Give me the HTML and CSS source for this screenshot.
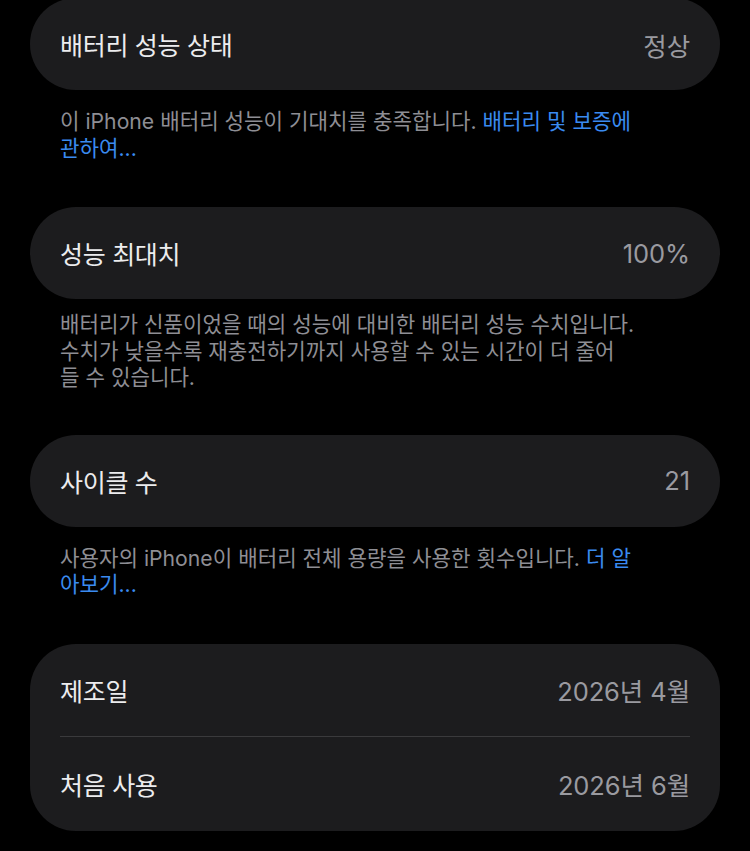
FILE: index.html
```html
<!DOCTYPE html>
<html lang="ko">
<head>
<meta charset="utf-8">
<title>배터리 성능 상태</title>
<link rel="stylesheet" href="styles.css">
</head>
<body>
<main class="page">
  <section class="group group-first">
    <div class="card">
      <div class="row"><span class="label">배터리 성능 상태</span><span class="value">정상</span></div>
    </div>
    <p class="note">이 iPhone 배터리 성능이 기대치를 충족합니다. <a class="link">배터리 및 보증에<br>관하여...</a></p>
  </section>
  <section class="group">
    <div class="card">
      <div class="row"><span class="label">성능 최대치</span><span class="value">100%</span></div>
    </div>
    <p class="note note-compact">배터리가 신품이었을 때의 성능에 대비한 배터리 성능 수치입니다.<br>수치가 낮을수록 재충전하기까지 사용할 수 있는 시간이 더 줄어<br>들 수 있습니다.</p>
  </section>
  <section class="group">
    <div class="card">
      <div class="row"><span class="label">사이클 수</span><span class="value">21</span></div>
    </div>
    <p class="note">사용자의 iPhone이 배터리 전체 용량을 사용한 횟수입니다. <a class="link">더 알<br>아보기...</a></p>
  </section>
  <section class="group">
    <div class="card">
      <div class="row"><span class="label">제조일</span><span class="value">2026년 4월</span></div>
      <div class="divider"></div>
      <div class="row row-last"><span class="label">처음 사용</span><span class="value">2026년 6월</span></div>
    </div>
  </section>
</main>
</body>
</html>
```
FILE: styles.css
```css
html, body {
  margin: 0;
  padding: 0;
  background: #000;
}
body {
  font-family: Inter, "Noto Sans CJK KR", sans-serif;
  color: #fff;
  -webkit-font-smoothing: antialiased;
}
.page {
  display: flex;
  flex-direction: column;
  padding: 0 30px;
}
.group-first {
  margin-top: -2px;
}
.card {
  background: #1c1c1e;
  border-radius: 46px;
  display: flex;
  flex-direction: column;
}
.row {
  height: 92px;
  display: flex;
  align-items: center;
  justify-content: space-between;
  padding: 0 30px;
}
.row-last {
  height: 94px;
}
.label {
  font-size: 25px;
  letter-spacing: -0.3px;
  color: #ececee;
}
.value {
  font-size: 25.5px;
  letter-spacing: -0.1px;
  color: #9a9aa0;
}
.divider {
  height: 1px;
  margin: 0 30px;
  background: #3a3a3c;
}
.note {
  margin: 18px 0 46px;
  padding: 0 30px;
  font-size: 21.2px;
  line-height: 26.5px;
  color: #8e8e94;
  white-space: nowrap;
}
.note-compact {
  margin-top: 12px;
  margin-bottom: 44px;
}
.link {
  color: #3a8bf0;
}
```
